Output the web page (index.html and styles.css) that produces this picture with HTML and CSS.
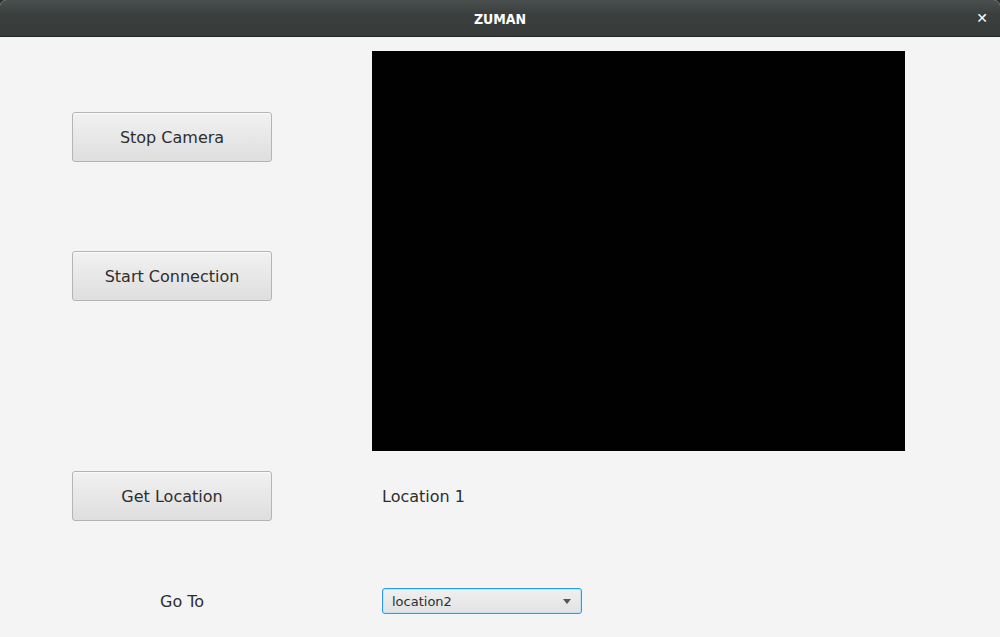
FILE: index.html
```html
<!DOCTYPE html>
<html>
<head>
<meta charset="utf-8">
<link rel="stylesheet" href="styles.css">
</head>
<body>
<div class="window">
  <div class="titlebar">
    <span class="title">ZUMAN</span>
    <span class="close">✕</span>
  </div>
  <div class="content">
    <div class="left-top">
      <button class="btn">Stop Camera</button>
      <button class="btn">Start Connection</button>
    </div>
    <div class="video"></div>
    <button class="btn">Get Location</button>
    <div class="loc-label">Location 1</div>
    <div class="goto">Go To</div>
    <div class="combo">
      <span>location2</span>
      <span class="arrow"></span>
    </div>
  </div>
</div>
</body>
</html>
```
FILE: styles.css
```css
html, body {
  margin: 0;
  padding: 0;
  background: #2b2b2b;
}
body {
  font-family: "DejaVu Sans", "Liberation Sans", sans-serif;
  width: 1000px;
  height: 637px;
  overflow: hidden;
}
.window {
  width: 1000px;
  height: 637px;
  background: #f4f4f4;
  border-radius: 6px 6px 0 0;
  overflow: hidden;
  display: flex;
  flex-direction: column;
}
.titlebar {
  height: 36px;
  flex: none;
  background: linear-gradient(#4a504f, #3a3f3e 40%, #373c3b);
  border-bottom: 1px solid #262928;
  display: flex;
  align-items: center;
  justify-content: center;
  position: relative;
}
.title {
  color: #ffffff;
  font-family: "DejaVu Sans Condensed", "DejaVu Sans", sans-serif;
  font-size: 14px;
  font-weight: bold;
  padding-top: 1px;
}
.close {
  position: absolute;
  right: 12px;
  top: 10px;
  color: #ffffff;
  font-size: 14px;
  font-weight: bold;
}
.content {
  display: grid;
  grid-template-columns: 200px 533px;
  grid-template-rows: 400px 50px 26px;
  column-gap: 100px;
  row-gap: 20px;
  padding: 14px 0 0 72px;
}
.left-top {
  display: flex;
  flex-direction: column;
  padding-top: 61px;
  gap: 89px;
}
.btn {
  width: 200px;
  height: 50px;
  border: 1px solid #b4b4b4;
  border-radius: 3px;
  background: linear-gradient(#f1f1f1, #dedede);
  color: #2e2e2e;
  font-family: "DejaVu Sans", "Liberation Sans", sans-serif;
  font-size: 16px;
  padding: 0;
  box-shadow: inset 0 1px 0 #fbfbfb;
}
.video {
  background: #020101;
}
.loc-label {
  padding-left: 10px;
  display: flex;
  align-items: center;
  font-size: 16px;
  color: #2e2e2e;
}
.goto {
  margin-top: 47px;
  padding-left: 88px;
  font-size: 16px;
  color: #2e2e2e;
  display: flex;
  align-items: center;
  height: 26px;
}
.combo {
  margin-top: 47px;
  margin-left: 10px;
  width: 200px;
  height: 26px;
  box-sizing: border-box;
  border: 1px solid #2aa0d8;
  border-radius: 3px;
  box-shadow: inset 0 0 0 1px #bfe3f5;
  background: linear-gradient(#f0f0f0, #e2e2e2);
  display: flex;
  align-items: center;
  justify-content: space-between;
  padding: 0 10px 0 9px;
  font-size: 13px;
  color: #2e2e2e;
}
.arrow {
  width: 0;
  height: 0;
  border-left: 4px solid transparent;
  border-right: 4px solid transparent;
  border-top: 5px solid #555;
}
```
